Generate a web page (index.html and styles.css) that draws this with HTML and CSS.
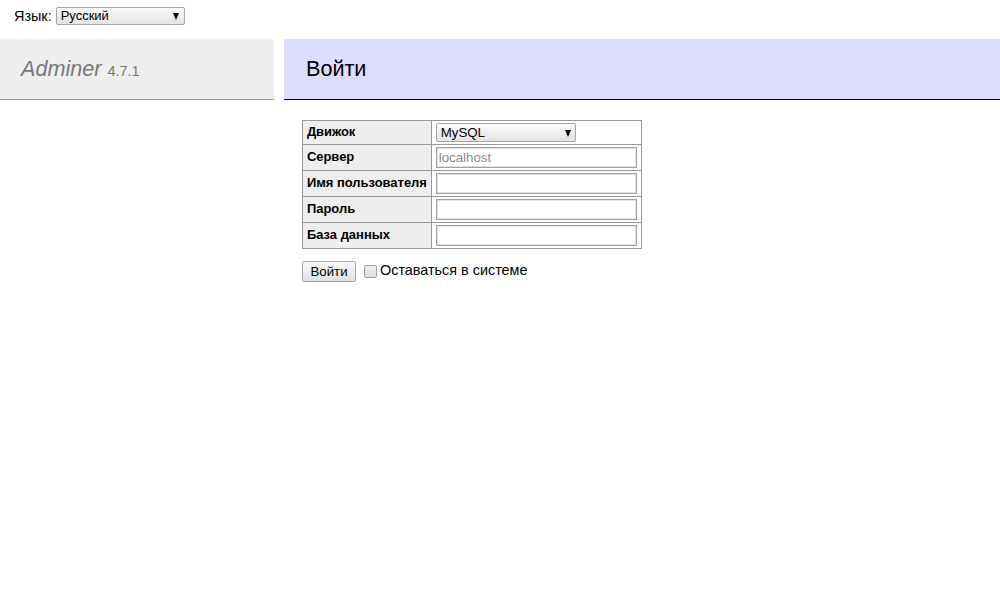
FILE: index.html
```html
<!DOCTYPE html>
<html lang="ru">
<head>
<meta charset="utf-8">
<title>Войти - Adminer</title>
<link rel="stylesheet" href="styles.css">
</head>
<body>
<div class="lang">
  <span class="lang-label">Язык:</span>
  <span class="sel sel-lang"><select class="select"><option>Русский</option></select><span class="arrow"></span></span>
</div>
<div class="layout">
  <div class="menu">
    <h1><span class="brand">Adminer</span> <span class="version">4.7.1</span></h1>
  </div>
  <div class="content">
    <h2>Войти</h2>
    <form class="login">
      <table class="grid">
        <tr><th>Движок</th><td><span class="sel sel-driver"><select class="select"><option>MySQL</option></select><span class="arrow"></span></span></td></tr>
        <tr><th>Сервер</th><td><input class="field" type="text" placeholder="localhost"></td></tr>
        <tr><th>Имя пользователя</th><td><input class="field" type="text"></td></tr>
        <tr><th>Пароль</th><td><input class="field" type="password"></td></tr>
        <tr><th>База данных</th><td><input class="field" type="text"></td></tr>
      </table>
      <div class="actions">
        <button class="btn" type="button">Войти</button>
        <label class="remember"><input class="check" type="checkbox"><span>Оставаться в системе</span></label>
      </div>
    </form>
  </div>
</div>
</body>
</html>
```
FILE: styles.css
```css
html, body { margin: 0; padding: 0; background: #fff; }
body {
  color: #000;
  font-family: "Liberation Sans", Arial, sans-serif;
  font-size: 14.4px;
  line-height: 1.25;
}
.lang {
  height: 39px;
  box-sizing: border-box;
  padding: 7px 14px 0;
  display: flex;
  align-items: flex-start;
  gap: 4px;
}
.lang-label { line-height: 18px; }
.sel { position: relative; display: inline-block; vertical-align: top; }
.select {
  -webkit-appearance: none;
  appearance: none;
  margin: 0;
  box-sizing: border-box;
  border: 1px solid #a6a6a6;
  border-radius: 2px;
  background: linear-gradient(#fafafa, #e4e4e4);
  font-family: "Liberation Sans", Arial, sans-serif;
  font-size: 13px;
  color: #000;
  padding: 0 0 0 4px;
  display: block;
}
.sel-lang .select { width: 129px; height: 18px; line-height: 16px; }
.sel-driver .select { width: 140px; height: 19px; line-height: 17px; font-size: 13.3px; }
.arrow {
  position: absolute;
  top: 50%;
  right: 6px;
  margin-top: -3px;
  width: 0; height: 0;
  border-left: 3.5px solid transparent;
  border-right: 3.5px solid transparent;
  border-top: 7px solid #000;
}
.sel-driver .arrow { right: 5px; }
.layout { display: flex; align-items: flex-start; }
.menu { width: 274px; flex: none; }
h1 {
  margin: 0;
  height: 61px;
  box-sizing: border-box;
  padding: 17px 21px;
  line-height: 26px;
  font-size: 21.6px;
  font-weight: normal;
  color: #777;
  background: #eee;
  border-bottom: 1px solid #999;
}
.brand { font-style: italic; }
.version { font-size: 14.5px; color: #777; }
.content { flex: 1; margin-left: 10px; }
h2 {
  margin: 0 0 20px 0;
  height: 61px;
  box-sizing: border-box;
  padding: 17px 22px;
  line-height: 26px;
  font-size: 21.6px;
  font-weight: normal;
  color: #000;
  background: #ddf;
  border-bottom: 1px solid #000;
}
.login { margin-left: 18px; }
.grid {
  border-spacing: 0;
  border-top: 1px solid #999;
  border-left: 1px solid #999;
  font-size: 12.96px;
}
.grid th, .grid td {
  border-right: 1px solid #999;
  border-bottom: 1px solid #999;
  padding: 2px 3.9px;
  line-height: 16px;
}
.grid th { background: #eee; text-align: left; vertical-align: top; }
.grid tr:first-child th { padding-top: 3px; }
.grid tr + tr th { padding-top: 4px; }
.grid td { vertical-align: middle; }
.field {
  display: block;
  margin: 0;
  box-sizing: border-box;
  width: 201px;
  height: 21px;
  border: 1px solid #a0a0a0;
  box-shadow: inset 0 0 0 1px #e2e2e2;
  padding: 1px 2px;
  font-family: "Liberation Sans", Arial, sans-serif;
  font-size: 13.3px;
  background: #fff;
}
.field::placeholder { color: #8a8a8a; }
.actions {
  display: flex;
  align-items: center;
  margin-top: 12px;
  gap: 8px;
}
.btn {
  margin: 0;
  height: 21px;
  width: 54px;
  box-sizing: border-box;
  border: 1px solid #a6a6a6;
  border-radius: 2px;
  background: linear-gradient(#fafafa, #e0e0e0);
  font-family: "Liberation Sans", Arial, sans-serif;
  font-size: 13.3px;
  color: #000;
  padding: 0;
}
.remember { display: flex; align-items: center; gap: 3px; margin-top: -4px; }
.check {
  -webkit-appearance: none;
  appearance: none;
  margin: 0;
  width: 13px;
  height: 13px;
  box-sizing: border-box;
  border: 1px solid #a0a0a0;
  border-radius: 2px;
  background: linear-gradient(#f2f2f2, #dcdcdc);
  margin-top: 3px;
}
```
